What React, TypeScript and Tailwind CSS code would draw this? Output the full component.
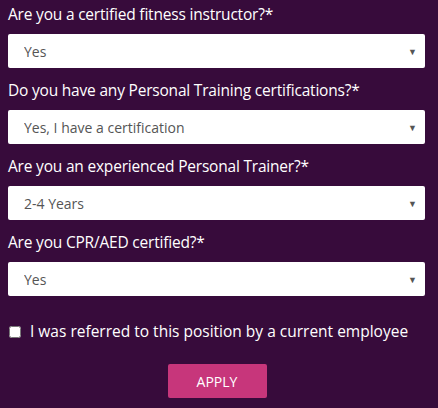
import { useState } from "react";

const questions = [
  {
    id: "instructor",
    label: "Are you a certified fitness instructor?*",
    options: ["Yes", "No"],
  },
  {
    id: "pt_cert",
    label: "Do you have any Personal Training certifications?*",
    options: ["Yes, I have a certification", "No"],
  },
  {
    id: "experience",
    label: "Are you an experienced Personal Trainer?*",
    options: ["2-4 Years", "0-2 Years", "4+ Years"],
  },
  {
    id: "cpr",
    label: "Are you CPR/AED certified?*",
    options: ["Yes", "No"],
  },
];

export default function App() {
  const [answers, setAnswers] = useState<Record<string, string>>({
    instructor: "Yes",
    pt_cert: "Yes, I have a certification",
    experience: "2-4 Years",
    cpr: "Yes",
  });
  const [referred, setReferred] = useState(false);

  return (
    <div
      className="w-[438px] h-[408px] bg-[#370b3b] text-white px-2 pt-[3px]"
      style={{ fontFamily: '"Open Sans", "Noto Sans", sans-serif' }}
    >
      {questions.map((q) => (
        <div key={q.id} className="mb-[11px]">
          <p className="text-[15.5px] font-medium leading-[20px] h-[31px] pt-[1px] tracking-[-0.2px]">
            {q.label}
          </p>
          <div className="relative w-[417px]">
            <select
              value={answers[q.id]}
              onChange={(e) =>
                setAnswers((prev) => ({ ...prev, [q.id]: e.target.value }))
              }
              className="appearance-none w-full h-[34px] bg-white rounded-[2px] pl-4 text-[14px] text-[#555] outline-none"
            >
              {q.options.map((opt) => (
                <option key={opt}>{opt}</option>
              ))}
            </select>
            <span className="absolute right-[8px] top-[11px] text-[9px] text-[#555] pointer-events-none">
              ▼
            </span>
          </div>
        </div>
      ))}

      <label className="flex items-center gap-[9px] mt-[24px] h-[24px] text-[15.5px] font-medium">
        <input
          type="checkbox"
          checked={referred}
          onChange={() => setReferred(!referred)}
          className="w-[12px] h-[12px] ml-px"
        />
        I was referred to this position by a current employee
      </label>

      <div className="flex justify-center mt-[20px] pr-[4px]">
        <button className="w-[99px] h-[34px] bg-[#c7367b] rounded-[2px] text-[14px] font-medium text-white">
          APPLY
        </button>
      </div>
    </div>
  );
}
